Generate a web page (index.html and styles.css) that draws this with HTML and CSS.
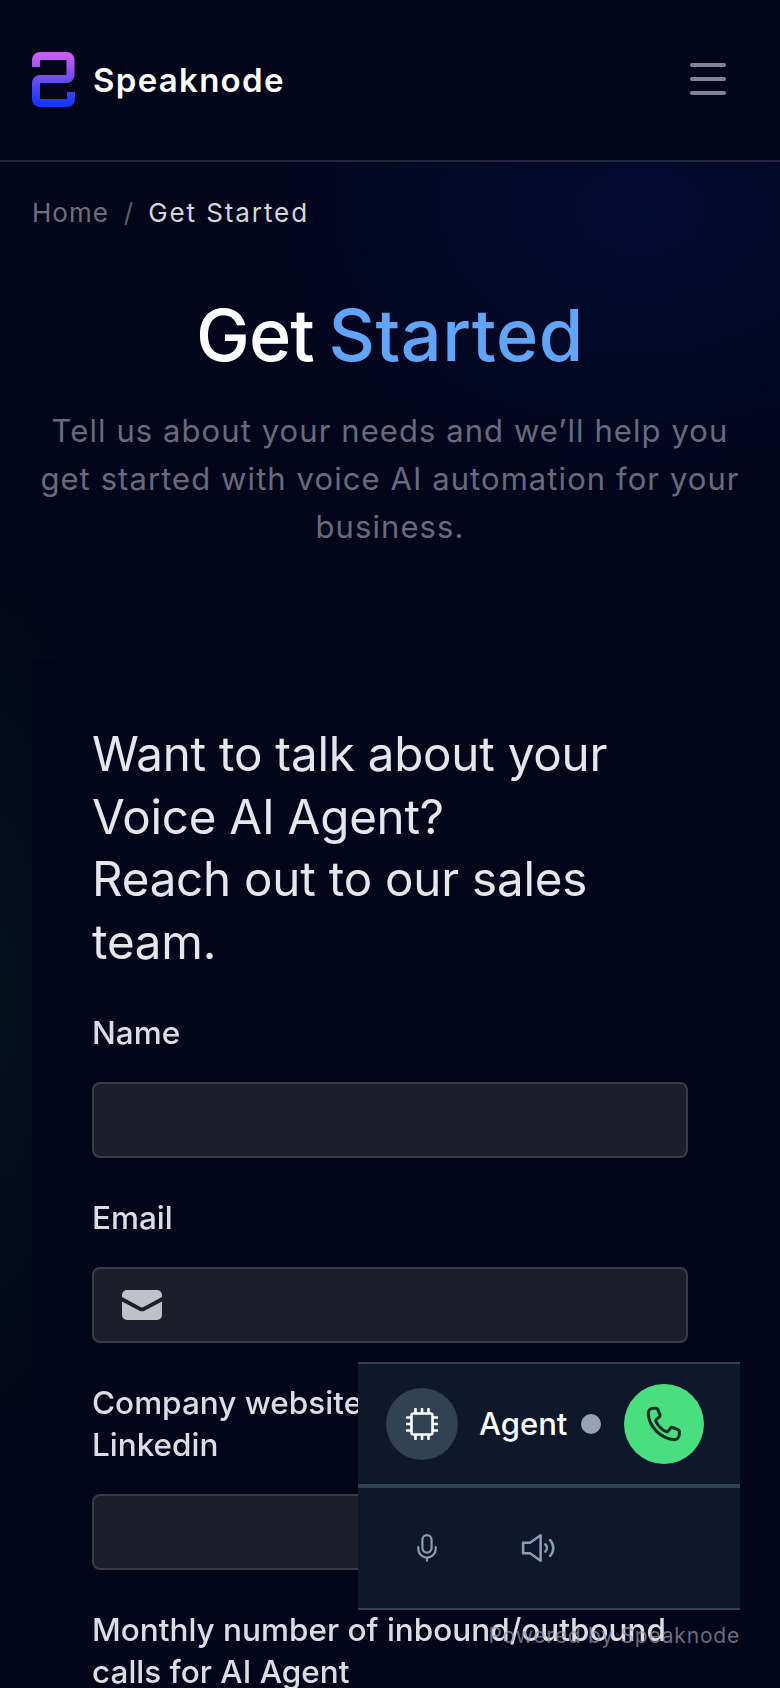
FILE: index.html
```html
<!DOCTYPE html>
<html lang="en">
<head>
<meta charset="utf-8">
<title>Get Started - Speaknode</title>
<link rel="stylesheet" href="styles.css">
</head>
<body>
<div class="page">
  <header class="topbar">
    <a class="brand">
      <svg class="brand-logo" viewBox="0 0 43 55" fill="none">
        <defs>
          <linearGradient id="logoGrad" x1="0" y1="0" x2="0" y2="1">
            <stop offset="0" stop-color="#c75ef0"/>
            <stop offset="0.5" stop-color="#6a4cf2"/>
            <stop offset="1" stop-color="#1438ff"/>
          </linearGradient>
        </defs>
        <path d="M4 15V8a4 4 0 0 1 4-4H34.500a4 4 0 0 1 4 4V23a4 4 0 0 1-4 4H8a4 4 0 0 0-4 4V47a4 4 0 0 0 4 4H35a4 4 0 0 0 4-4V40" stroke="url(#logoGrad)" stroke-width="8"/>
      </svg>
      <span class="brand-name">Speaknode</span>
    </a>
    <button class="burger"><span></span><span></span><span></span></button>
  </header>
  <main class="content">
    <nav class="crumbs"><span class="crumb-home">Home</span><span class="crumb-sep">/</span><span class="crumb-here">Get Started</span></nav>
    <section class="hero">
      <h1 class="hero-title"><span class="hero-plain">Get</span> <span class="hero-accent">Started</span></h1>
      <p class="hero-text">Tell us about your needs and we’ll help you get started with voice AI automation for your business.</p>
    </section>
    <section class="panel">
      <div class="panel-inner">
        <h2 class="form-title">Want to talk about your Voice AI Agent?<br>Reach out to our sales team.</h2>
        <div class="field">
          <label class="field-label">Name</label>
          <div class="input"></div>
        </div>
        <div class="field">
          <label class="field-label">Email</label>
          <div class="input">
            <svg class="mail" viewBox="0 0 40 30" fill="#c0c1c8"><path d="M5 0h30a5 5 0 0 1 5 5v2L21.500 17a3 3 0 0 1-3 0L0 7V5a5 5 0 0 1 5-5z"/><path d="M0 11.500L17 20.500a6 6 0 0 0 6 0L40 11.500V25a5 5 0 0 1-5 5H5a5 5 0 0 1-5-5z"/></svg>
          </div>
        </div>
        <div class="field">
          <label class="field-label">Company website or<br>Linkedin</label>
          <div class="input"></div>
        </div>
        <div class="field">
          <label class="field-label">Monthly number of inbound/outbound calls for AI Agent</label>
          <div class="input"></div>
        </div>
      </div>
    </section>
  </main>
  <aside class="widget">
    <div class="widget-top">
      <span class="agent-avatar">
        <svg viewBox="0 0 32 32" fill="none" stroke="#fff" stroke-width="2.600" stroke-linecap="round">
          <rect x="5.500" y="5.500" width="21" height="21" rx="2"/>
          <path d="M9.500 1v4M16 1v4M22.500 1v4M9.500 27v4M16 27v4M22.500 27v4M1 9.500h4M1 16h4M1 22.500h4M27 9.500h4M27 16h4M27 22.500h4"/>
        </svg>
      </span>
      <span class="agent-name">Agent</span>
      <span class="agent-dot"></span>
      <button class="call-btn">
        <svg viewBox="0 0 24 24" fill="none" stroke="#0f2f22" stroke-width="1.800" stroke-linecap="round" stroke-linejoin="round"><path d="M5.500 2.500h1.700c.5 0 .9.300 1.100.8l1.300 3.200c.2.500 0 1-.4 1.300L7.400 9.200c-.4.300-.5.800-.3 1.200 1.300 2.700 3.500 4.900 6.200 6.200.4.200.9.100 1.200-.3l1.400-1.800c.3-.4.800-.6 1.300-.4l3.200 1.300c.5.200.8.600.8 1.100v1.700c0 1.800-1.400 3.300-3.200 3.200C9.800 20.500 3.200 13.900 2.500 5.700 2.400 3.900 3.800 2.500 5.500 2.500z"/></svg>
      </button>
    </div>
    <div class="widget-bottom">
      <button class="tool tool-mic">
        <svg viewBox="0 0 24 32" fill="none" stroke="#8b9db5" stroke-width="2.400" stroke-linecap="round"><rect x="7" y="2" width="10" height="19" rx="5"/><path d="M2.500 15v2a9.500 9.500 0 0 0 19 0v-2M12 26.500V30"/></svg>
      </button>
      <button class="tool tool-speaker">
        <svg viewBox="0 0 34 28" fill="none" stroke="#8b9db5" stroke-width="2.400" stroke-linejoin="round" stroke-linecap="round"><path d="M2 9h6.500L18.500 2v24L8.500 19H2z"/><path d="M23 10.500a5 5 0 0 1 0 7M27.500 6.500a11 11 0 0 1 0 15"/></svg>
      </button>
    </div>
  </aside>
  <p class="powered">Powered by Speaknode</p>
</div>
</body>
</html>
```
FILE: styles.css
```css
* { box-sizing: border-box; }
html, body { margin: 0; padding: 0; background: #03051a; }
.page {
  position: relative;
  width: 780px;
  height: 1688px;
  overflow: hidden;
  color: #fff;
  font-family: "Inter", "Liberation Sans", sans-serif;
  background:
    radial-gradient(ellipse 420px 300px at 640px 210px, #020b30 0%, rgba(2, 11, 48, 0) 100%),
    radial-gradient(ellipse 120px 500px at 0 1000px, #03111d 0%, rgba(3, 17, 29, 0) 100%),
    #03051a;
}
.topbar {
  height: 162px;
  padding: 0 54px 2px 32px;
  display: flex;
  align-items: center;
  justify-content: space-between;
  border-bottom: 2px solid #23263a;
  background: #03051a;
}
.brand { display: flex; align-items: center; gap: 18px; }
.brand-logo { width: 43px; height: 55px; display: block; }
.brand-name { margin-top: 2px; font-size: 33px; font-weight: 600; letter-spacing: 1.300px; line-height: 40px; }
.burger {
  width: 36px;
  padding: 0;
  display: flex;
  flex-direction: column;
  gap: 10px;
  background: none;
  border: 0;
}
.burger span { display: block; height: 4px; border-radius: 2px; background: #7f8298; }
.content { padding: 30px 32px 0; }
.crumbs { display: flex; align-items: center; height: 40px; font-size: 26px; }
.crumb-home { color: #6d6f80; letter-spacing: 1px; }
.crumb-sep { margin: 0 15px; color: #5a5c6c; }
.crumb-here { color: #d5d6dc; letter-spacing: 1.900px; }
.hero { margin-top: 61px; text-align: center; }
.hero-title { margin: 0; font-size: 72px; line-height: 84px; font-weight: 500; word-spacing: -4.500px; }
.hero-plain { letter-spacing: -1px; }
.hero-accent { color: #60a5fa; letter-spacing: 0.500px; }
.hero-text {
  width: 712px;
  margin: 30px auto 0;
  font-size: 31px;
  line-height: 48px;
  letter-spacing: 1.080px;
  color: #686b7e;
}
.panel { margin-top: 109px; padding: 63px 60px 0; background: #03051a; }
.panel-inner { filter: blur(0.7px); }
.form-title { margin: 0 0 6px; font-size: 47.500px; line-height: 62.500px; font-weight: 400; letter-spacing: -0.200px; color: #e6e7ec; }
.field { margin-top: 39px; }
.field-label { display: block; font-size: 31.500px; line-height: 42px; font-weight: 500; color: #dcdde3; }
.input {
  height: 76px;
  margin-top: 28px;
  padding-left: 28px;
  display: flex;
  align-items: center;
  border: 2px solid #3a3c48;
  border-radius: 8px;
  background: #1c1e29;
}
.mail { width: 40px; height: 30px; display: block; }
.widget {
  position: absolute;
  left: 358px;
  top: 1362px;
  width: 382px;
  height: 248px;
  background: #0f172a;
  border-top: 2px solid #334155;
  border-bottom: 2px solid #334155;
}
.widget-top {
  height: 124px;
  padding: 0 36px 0 28px;
  display: flex;
  align-items: center;
  border-bottom: 4px solid #334155;
}
.agent-avatar {
  width: 72px;
  height: 72px;
  border-radius: 50%;
  background: #334155;
  display: flex;
  align-items: center;
  justify-content: center;
}
.agent-avatar svg { width: 32px; height: 32px; display: block; }
.agent-name { margin-left: 21px; font-size: 31px; font-weight: 500; line-height: 40px; }
.agent-dot { width: 20px; height: 20px; margin-left: 14px; border-radius: 50%; background: #94a3b8; }
.call-btn {
  width: 80px;
  height: 80px;
  margin-left: auto;
  padding: 0;
  border: 0;
  border-radius: 50%;
  background: #4ade80;
  display: flex;
  align-items: center;
  justify-content: center;
}
.call-btn svg { width: 40px; height: 40px; display: block; }
.widget-bottom { height: 120px; display: flex; align-items: center; }
.tool { padding: 0; border: 0; background: none; display: block; }
.tool svg { display: block; }
.tool-mic { margin-left: 58px; }
.tool-mic svg { width: 22px; height: 30px; }
.tool-speaker { margin-left: 83px; }
.tool-speaker svg { width: 36px; height: 30px; }
.powered {
  position: absolute;
  right: 40px;
  top: 1622px;
  margin: 0;
  font-size: 21px;
  line-height: 28px;
  letter-spacing: 0.800px;
  color: rgba(148, 150, 165, 0.72);
}
```
